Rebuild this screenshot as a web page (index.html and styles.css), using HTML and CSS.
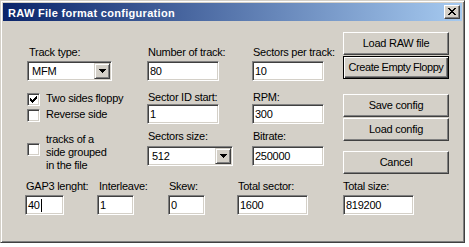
FILE: index.html
```html
<!DOCTYPE html>
<html>
<head>
<meta charset="utf-8">
<title>RAW File format configuration</title>
<link rel="stylesheet" href="styles.css">
</head>
<body>
<div class="window">
  <div class="titlebar">
    <span class="title">RAW File format configuration</span>
    <span class="close"><svg width="14" height="12" viewBox="0 0 14 12" shape-rendering="crispEdges"><path d="M3 2h2v1H3zM9 2h2v1H9zM4 3h2v1H4zM8 3h2v1H8zM5 4h4v1H5zM6 5h2v1H6zM5 6h4v1H5zM4 7h2v1H4zM8 7h2v1H8zM3 8h2v1H3zM9 8h2v1H9z"/></svg></span>
  </div>
  <div class="client">
    <div class="top">
      <div class="col col1">
        <div class="label label-in2">Track type:</div>
        <div class="combo combo-mfm gap-s">
          <span class="combo-text">MFM</span>
          <span class="combo-btn"><svg width="14" height="14" viewBox="0 0 14 14" shape-rendering="crispEdges"><path d="M4 5h7v1H4zM5 6h5v1H5zM6 7h3v1H6zM7 8h1v1H7z"/></svg></span>
        </div>
        <div class="check check-first">
          <span class="box"><svg width="11" height="11" viewBox="0 0 11 11" shape-rendering="crispEdges"><path d="M2 4h1v3H2zM3 5h1v3H3zM4 6h1v3H4zM5 5h1v3H5zM6 4h1v3H6zM7 3h1v3H7zM8 2h1v3H8z"/></svg></span>
          <span class="check-text">Two sides floppy</span>
        </div>
        <div class="check">
          <span class="box"></span>
          <span class="check-text">Reverse side</span>
        </div>
        <div class="check check-multi">
          <span class="box"></span>
          <span class="check-text multi">tracks of a side grouped in the file</span>
        </div>
      </div>
      <div class="col col2">
        <div class="label">Number of track:</div>
        <div class="edit w72 gap-s">80</div>
        <div class="label gap-m">Sector ID start:</div>
        <div class="edit w72">1</div>
        <div class="label gap-l">Sectors size:</div>
        <div class="combo combo-size gap-t">
          <span class="combo-text">512</span>
          <span class="combo-btn"><svg width="14" height="14" viewBox="0 0 14 14" shape-rendering="crispEdges"><path d="M4 5h7v1H4zM5 6h5v1H5zM6 7h3v1H6zM7 8h1v1H7z"/></svg></span>
        </div>
      </div>
      <div class="col col3">
        <div class="label">Sectors per track:</div>
        <div class="edit w72 gap-s">10</div>
        <div class="label gap-m">RPM:</div>
        <div class="edit w72">300</div>
        <div class="label gap-l">Bitrate:</div>
        <div class="edit w72 gap-t">250000</div>
      </div>
      <div class="buttons">
        <div class="btn">Load RAW file</div>
        <div class="btn btn-default gap-1">Create Empty Floppy</div>
        <div class="btn gap-save">Save config</div>
        <div class="btn gap-1">Load config</div>
        <div class="btn gap-cancel">Cancel</div>
      </div>
    </div>
    <div class="bottom">
      <div class="field f-gap">
        <div class="label">GAP3 lenght:</div>
        <div class="edit w39 gap-s">40<span class="caret"></span></div>
      </div>
      <div class="field f-inter">
        <div class="label label-in2">Interleave:</div>
        <div class="edit w37 gap-s">1</div>
      </div>
      <div class="field f-skew">
        <div class="label">Skew:</div>
        <div class="edit w37 gap-s">0</div>
      </div>
      <div class="field f-total">
        <div class="label">Total sector:</div>
        <div class="edit w71 gap-s">1600</div>
      </div>
      <div class="field">
        <div class="label label-in0">Total size:</div>
        <div class="edit w71 gap-s">819200</div>
      </div>
    </div>
  </div>
</div>
</body>
</html>
```

FILE: styles.css
```css
* { box-sizing: border-box; }

html, body {
  margin: 0;
  padding: 0;
  background: #ffffff;
}

body {
  font-family: "Liberation Sans", Arial, sans-serif;
  font-size: 11px;
  letter-spacing: -0.25px;
  color: #000000;
}

.window {
  width: 465px;
  height: 243px;
  background: #d4d0c8;
  border: 1px solid;
  border-color: #d4d0c8 #404040 #404040 #d4d0c8;
  box-shadow: inset 1px 1px #ffffff, inset -1px -1px #808080;
  padding: 2px;
  display: flex;
  flex-direction: column;
}

/* title bar */
.titlebar {
  height: 18px;
  flex: none;
  display: flex;
  align-items: flex-start;
  background: linear-gradient(to right, #0a246a, #a6caf0);
  padding: 0 2px 0 5px;
}

.title {
  flex: 1;
  color: #ffffff;
  font-weight: bold;
  letter-spacing: 0.3px;
  line-height: 18px;
  padding-top: 1px;
  white-space: nowrap;
}

.close {
  width: 16px;
  height: 14px;
  margin-top: 2px;
  background: #d4d0c8;
  border: 1px solid;
  border-color: #ffffff #404040 #404040 #ffffff;
  box-shadow: inset -1px -1px #808080;
  display: flex;
}

.close svg { display: block; }

/* client area */
.client {
  flex: 1;
  display: flex;
  flex-direction: column;
}

.top {
  height: 159px;
  display: flex;
  align-items: flex-start;
  padding-left: 24px;
}

.col {
  display: flex;
  flex-direction: column;
  align-items: flex-start;
  margin-top: 25px;
}

.col1 { width: 120px; }
.col2 { width: 105px; }
.col3 { width: 91px; }

.buttons {
  display: flex;
  flex-direction: column;
  margin-top: 11px;
}

.label {
  line-height: 13px;
  height: 13px;
  padding-left: 1px;
  white-space: nowrap;
}

.label-in2 { padding-left: 2px; }
.label-in0 { padding-left: 0; }

.gap-s { margin-top: 2px; }
.gap-t { margin-top: 3px; }
.gap-m { margin-top: 10px; }
.gap-l { margin-top: 6px; }
.gap-1 { margin-top: 1px; }
.gap-save { margin-top: 15px; }
.gap-cancel { margin-top: 10px; }

/* sunken edit */
.edit {
  height: 20px;
  background: #ffffff;
  border: 1px solid;
  border-color: #808080 #ffffff #ffffff #808080;
  box-shadow: inset 1px 1px #404040, inset -1px -1px #d4d0c8;
  padding: 1px 2px;
  line-height: 16px;
  white-space: nowrap;
}

.w72 { width: 72px; }
.w71 { width: 71px; }
.w39 { width: 39px; }
.w37 { width: 37px; }

.caret {
  display: inline-block;
  width: 1px;
  height: 13px;
  background: #000000;
  vertical-align: -3px;
  margin-left: 1px;
}

/* combo box */
.combo {
  height: 20px;
  background: #ffffff;
  border: 1px solid;
  border-color: #808080 #ffffff #ffffff #808080;
  box-shadow: inset 1px 1px #404040, inset -1px -1px #d4d0c8;
  padding: 1px;
  display: flex;
}

.combo-mfm { width: 85px; }
.combo-size { width: 86px; }

.combo-text {
  flex: 1;
  line-height: 16px;
  padding-left: 3px;
}

.combo-btn {
  width: 16px;
  height: 16px;
  background: #d4d0c8;
  border: 1px solid;
  border-color: #d4d0c8 #404040 #404040 #d4d0c8;
  box-shadow: inset 1px 1px #ffffff, inset -1px -1px #808080;
  display: flex;
}

.combo-btn svg { display: block; }

/* checkboxes */
.check {
  display: flex;
  align-items: flex-start;
  height: 16px;
}

.check-first { margin-top: 11px; }

.check-multi {
  height: auto;
  margin-top: 9px;
}

.box {
  width: 13px;
  height: 13px;
  margin-top: 1px;
  background: #ffffff;
  border: 1px solid;
  border-color: #808080 #ffffff #ffffff #808080;
  box-shadow: inset 1px 1px #404040, inset -1px -1px #d4d0c8;
  display: flex;
  flex: none;
}

.box svg { display: block; }

.check-multi .box { margin-top: 10px; }

.check-text {
  margin-left: 6px;
  line-height: 13px;
  white-space: nowrap;
}

.multi {
  white-space: normal;
  width: 68px;
}

/* push buttons */
.btn {
  width: 106px;
  height: 23px;
  background: #d4d0c8;
  border: 1px solid;
  border-color: #ffffff #404040 #404040 #ffffff;
  box-shadow: inset -1px -1px #808080;
  text-align: center;
  line-height: 20px;
  white-space: nowrap;
}

.btn-default {
  border-color: #000000;
  box-shadow: inset 1px 1px #ffffff, inset -1px -1px #404040, inset -2px -2px #808080;
  letter-spacing: -0.45px;
}

/* bottom row */
.bottom {
  display: flex;
  padding-left: 22px;
}

.field {
  display: flex;
  flex-direction: column;
  align-items: flex-start;
}

.f-gap { width: 72px; }
.f-inter { width: 71px; }
.f-skew { width: 69px; }
.f-total { width: 106px; }
```
